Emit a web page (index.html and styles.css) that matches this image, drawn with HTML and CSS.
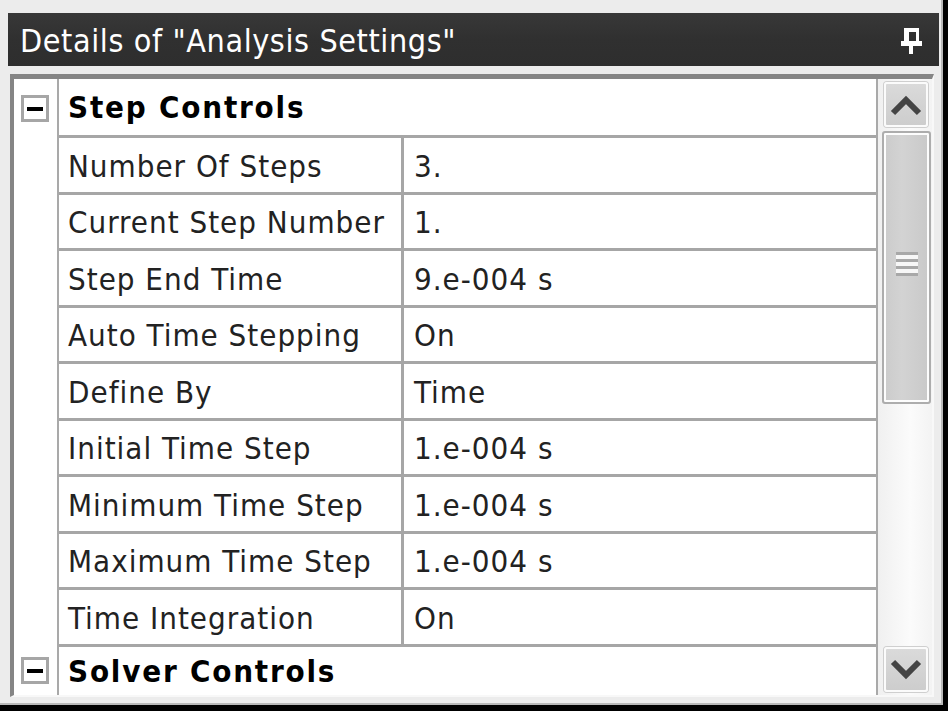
FILE: index.html
```html
<!DOCTYPE html>
<html lang="en">
<head>
  <meta charset="UTF-8" />
  <title>Details of "Analysis Settings"</title>
  <link rel="stylesheet" href="styles.css">
</head>
<body>
  <div class="panel">
    <div class="titlebar">
      <span class="title">Details of "Analysis Settings"</span>
      <svg class="pin" width="22" height="26" viewBox="0 0 22 26">
        <rect x="3" y="0" width="15" height="4" fill="#fff"/>
        <rect x="3" y="0" width="5" height="15" fill="#fff"/>
        <rect x="15" y="0" width="3" height="15" fill="#fff"/>
        <rect x="0" y="13" width="21" height="5" fill="#fff"/>
        <rect x="8" y="18" width="4" height="8" fill="#fff"/>
      </svg>
    </div>

    <div class="grid">
      <div class="table">
        <div class="gutter head"><span class="toggle"></span></div>
        <div class="group">Step Controls</div>

        <div class="gutter"></div><div class="cell label">Number Of Steps</div><div class="cell value">3.</div>
        <div class="gutter"></div><div class="cell label">Current Step Number</div><div class="cell value">1.</div>
        <div class="gutter"></div><div class="cell label">Step End Time</div><div class="cell value">9.e-004 s</div>
        <div class="gutter"></div><div class="cell label">Auto Time Stepping</div><div class="cell value">On</div>
        <div class="gutter"></div><div class="cell label">Define By</div><div class="cell value">Time</div>
        <div class="gutter"></div><div class="cell label">Initial Time Step</div><div class="cell value">1.e-004 s</div>
        <div class="gutter"></div><div class="cell label">Minimum Time Step</div><div class="cell value">1.e-004 s</div>
        <div class="gutter"></div><div class="cell label">Maximum Time Step</div><div class="cell value">1.e-004 s</div>
        <div class="gutter"></div><div class="cell label">Time Integration</div><div class="cell value">On</div>

        <div class="gutter head"><span class="toggle"></span></div>
        <div class="group last">Solver Controls</div>
      </div>

      <div class="scrollbar">
        <div class="sbtn">
          <svg width="32" height="22" viewBox="0 0 32 22"><polyline points="3,19 16,6 29,19" fill="none" stroke="#444" stroke-width="6"/></svg>
        </div>
        <div class="thumb">
          <span class="grip"></span>
        </div>
        <div class="track"></div>
        <div class="sbtn">
          <svg width="32" height="22" viewBox="0 0 32 22"><polyline points="3,3 16,16 29,3" fill="none" stroke="#444" stroke-width="6"/></svg>
        </div>
      </div>
    </div>
  </div>
</body>
</html>
```

FILE: styles.css
```css
body {
  margin: 0;
  background: #000;
  font-family: "DejaVu Sans Condensed", "DejaVu Sans", sans-serif;
}
.panel {
  width: 941px;
  height: 690px;
  background: #ececec;
  border-right: 2px solid #b9b9b9;
  border-bottom: 2px solid #b9b9b9;
  padding-top: 13px;
}
.titlebar {
  margin-left: 8px;
  width: 931px;
  height: 53px;
  background: linear-gradient(#383838, #303030 50%, #2e2e2e);
  display: flex;
  align-items: center;
  justify-content: space-between;
  padding: 2px 16px 0 12px;
  box-sizing: border-box;
}
.title {
  color: #fff;
  font-size: 32px;
  letter-spacing: 0.6px;
}
.pin {
  display: block;
}
.grid {
  margin: 8px 0 0 10px;
  width: 924px;
  display: flex;
  border-top: 5px solid #858585;
  border-left: 4px solid #858585;
  border-bottom: 2px solid #f8f8f8;
  border-right: 2px solid #f8f8f8;
  box-sizing: border-box;
  background: #fff;
}
.table {
  display: grid;
  grid-template-columns: 45px 342px 475px;
  grid-template-rows: 59px repeat(9, 56.5px) 48.5px;
}
.gutter {
  border-right: 2px solid #a9a9a9;
  display: flex;
  align-items: center;
  justify-content: center;
  padding-right: 2px;
}
.toggle {
  width: 28px;
  height: 27px;
  border: 3px solid #a6a6a6;
  box-sizing: border-box;
  display: flex;
  align-items: center;
  justify-content: center;
}
.toggle::before {
  content: "";
  width: 16px;
  height: 4px;
  background: #000;
}
.group {
  grid-column: span 2;
  display: flex;
  align-items: center;
  padding-left: 9px;
  font-size: 31px;
  font-weight: bold;
  letter-spacing: 1.8px;
  color: #000;
  border-bottom: 3px solid #a6a6a6;
}
.group.last {
  border-bottom: none;
}
.cell {
  display: flex;
  align-items: center;
  font-size: 31px;
  letter-spacing: 1px;
  color: #222;
  border-bottom: 3px solid #a6a6a6;
  padding-top: 2px;
}
.label {
  padding-left: 9px;
}
.value {
  padding-left: 10px;
  border-left: 3px solid #a6a6a6;
}
.scrollbar {
  width: 56px;
  border-left: 2px solid #a9a9a9;
  background: linear-gradient(90deg, #f0f0f0, #fbfbfb 60%, #f3f3f3);
  padding: 3px 4px 3px 6px;
  box-sizing: border-box;
  display: flex;
  flex-direction: column;
}
.sbtn {
  height: 45px;
  background: linear-gradient(#dadada, #cdcdcd);
  border: 2px solid #fbfbfb;
  box-shadow: 0 0 0 1px #cfcfcf;
  border-radius: 3px;
  box-sizing: border-box;
  display: flex;
  align-items: center;
  justify-content: center;
}
.thumb {
  margin: 4px -3px 0 -2px;
  height: 269px;
  background: linear-gradient(90deg, #cbcbcb, #d3d3d3 40%, #c9c9c9);
  border: 2px solid #adadad;
  box-shadow: inset 0 0 0 2px #fdfdfd;
  border-radius: 3px;
  display: flex;
  align-items: center;
  justify-content: center;
}
.grip {
  width: 22px;
  height: 24px;
  margin-top: -8px;
  background: repeating-linear-gradient(#a8a8a8 0 3px, #f7f7f7 3px 7px);
}
.track {
  flex: 1;
}
```
